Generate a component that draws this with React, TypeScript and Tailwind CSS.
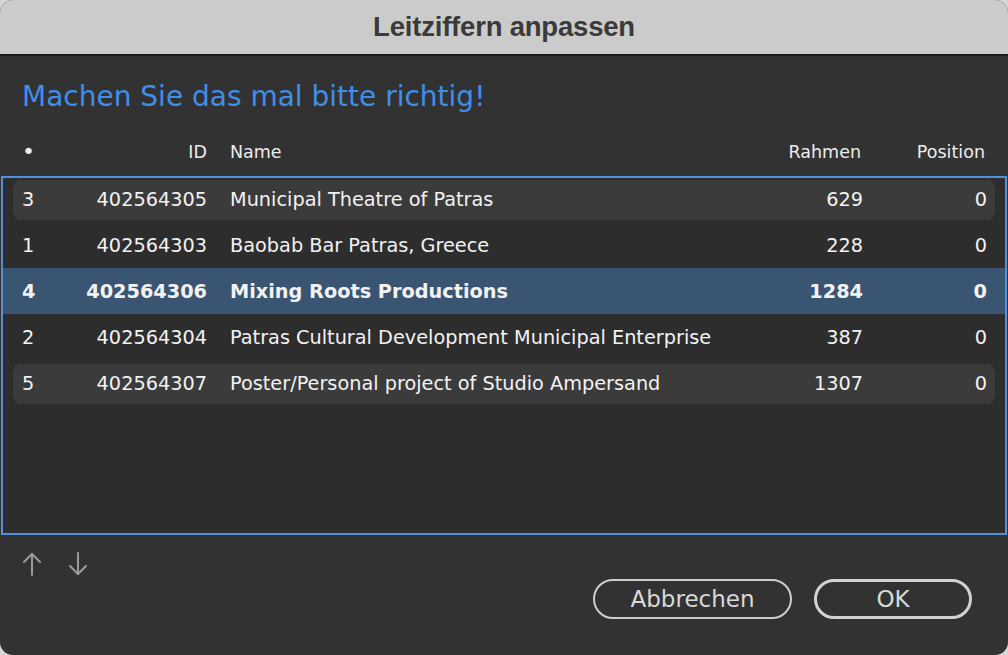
import { memo } from 'react';

type Row = {
  pos: number;
  id: string;
  name: string;
  frames: number;
  position: number;
};

const rows: Row[] = [
  { pos: 3, id: '402564305', name: 'Municipal Theatre of Patras', frames: 629, position: 0 },
  { pos: 1, id: '402564303', name: 'Baobab Bar Patras, Greece', frames: 228, position: 0 },
  { pos: 4, id: '402564306', name: 'Mixing Roots Productions', frames: 1284, position: 0 },
  { pos: 2, id: '402564304', name: 'Patras Cultural Development Municipal Enterprise', frames: 387, position: 0 },
  { pos: 5, id: '402564307', name: 'Poster/Personal project of Studio Ampersand', frames: 1307, position: 0 },
];

const SELECTED = 2;

const gridCols = 'grid grid-cols-[40px_145px_1fr_130px_124px] items-center';

function ArrowUp() {
  return (
    <svg width="20" height="24" viewBox="0 0 20 24" fill="none" stroke="#9b9b9b" strokeWidth="2" strokeLinecap="round" strokeLinejoin="round">
      <path d="M10 2V23" />
      <path d="M2 10L10 2L18 10" />
    </svg>
  );
}

function ArrowDown() {
  return (
    <svg width="20" height="24" viewBox="0 0 20 24" fill="none" stroke="#9b9b9b" strokeWidth="2" strokeLinecap="round" strokeLinejoin="round">
      <path d="M10 1V22" />
      <path d="M2 14L10 22L18 14" />
    </svg>
  );
}

function TableRow({ row, index }: { row: Row; index: number }) {
  const selected = index === SELECTED;
  const striped = index % 2 === 0 && !selected;

  return (
    <div className={`h-[46px] pt-[4px] pb-[2px] px-[10px] ${selected ? 'bg-[#3a5572]' : ''}`}>
      <div
        className={`${gridCols} h-full pl-[9px] pr-[8px] rounded-[8px] ${striped ? 'bg-[#3b3b3b]' : ''} ${
          selected ? 'font-bold' : ''
        }`}
      >
        <div>{row.pos}</div>
        <div className="text-right">{row.id}</div>
        <div className="pl-[23px] whitespace-nowrap">{row.name}</div>
        <div className="text-right">{row.frames}</div>
        <div className="text-right">{row.position}</div>
      </div>
    </div>
  );
}

function App() {
  return (
    <div className="w-[1008px] h-[655px] bg-[#d6d6d6]" style={{ fontFamily: '"DejaVu Sans", Verdana, sans-serif' }}>
      <div className="w-full h-full rounded-[13px] overflow-hidden flex flex-col bg-[#323232]">
        {/* title bar */}
        <div className="h-[56px] shrink-0 flex items-center justify-center bg-[#cbcbcb] border-b-2 border-[#1c1c1c]">
          <span
            className="text-[27.5px] font-bold text-[#3a3a3a] tracking-[-0.2px]"
            style={{ fontFamily: '"Liberation Sans", Arial, sans-serif' }}
          >
            Leitziffern anpassen
          </span>
        </div>

        <div className="flex-1 flex flex-col">
          <div className="pt-[24px] pl-[22px] text-[28px] leading-[34px] text-[#3f8fe8]">
            Machen Sie das mal bitte richtig!
          </div>

          <div className={`${gridCols} mt-[22px] pl-[22px] pr-[23px] h-[32px] text-[17.5px] text-[#ececec]`}>
            <div className="text-[22px] leading-none">•</div>
            <div className="text-right">ID</div>
            <div className="pl-[23px]">Name</div>
            <div className="text-right">Rahmen</div>
            <div className="text-right">Position</div>
          </div>

          <div className="mt-[8px] mx-[1px] h-[359px] border-2 border-[#5290de] bg-[#2d2d2d] text-[19.3px] text-[#f2f2f2]">
            <div className="-mt-[2px]">
              {rows.map((row, i) => (
                <TableRow key={row.id} row={row} index={i} />
              ))}
            </div>
          </div>

          <div className="flex gap-[26px] pl-[22px] mt-[17px]">
            <ArrowUp />
            <ArrowDown />
          </div>

          <div className="flex justify-end gap-[22px] pr-[36px] mt-[3px]">
            <button className="w-[199px] h-[40px] rounded-full border-2 border-[#cdcdcd] text-[23px] leading-none text-[#d9d9d9]">
              Abbrechen
            </button>
            <button className="w-[158px] h-[40px] rounded-full border-[3px] border-[#d2d2d2] text-[23px] leading-none text-[#d9d9d9]">
              OK
            </button>
          </div>
        </div>
      </div>
    </div>
  );
}

export default memo(App);
